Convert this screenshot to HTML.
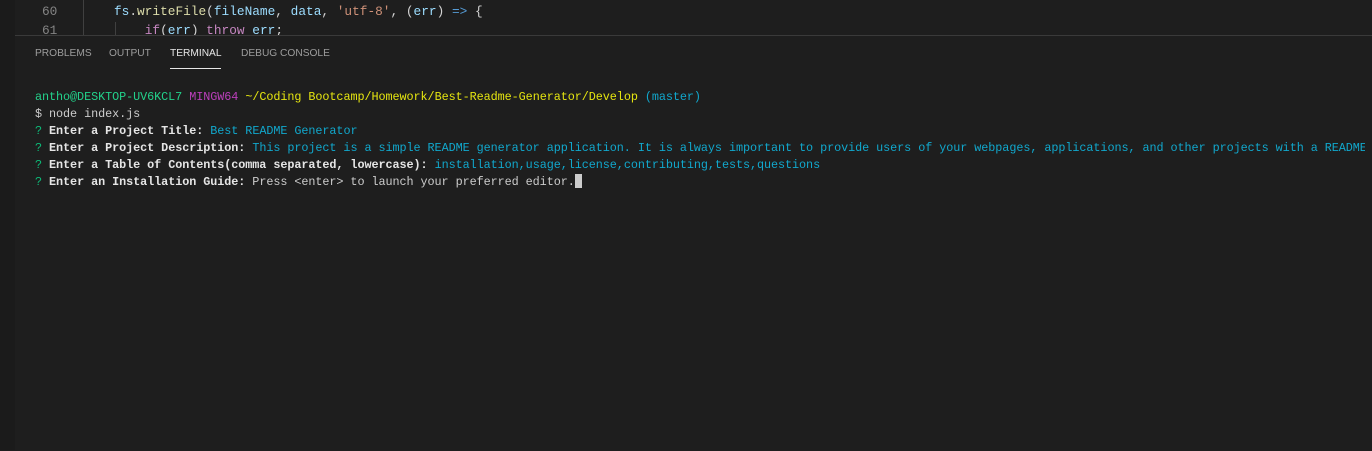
<!DOCTYPE html>
<html><head><meta charset="utf-8"><style>
html,body{margin:0;padding:0;width:1372px;height:450px;overflow:hidden;background:#1e1e1e;}
.left{position:absolute;left:0;top:0;width:15px;height:450px;background:#1b1b1b;}
.editor{position:absolute;left:15px;top:0;width:1357px;height:35px;background:#1e1e1e;overflow:hidden;font-family:"Liberation Mono",monospace;font-size:12.8px;}
.ln{position:absolute;left:27px;width:30px;color:#858585;text-align:left;}
.code{position:absolute;left:99px;white-space:pre;color:#d4d4d4;}
.guide{position:absolute;top:0;width:1px;height:35px;background:#404040;}
.panel{position:absolute;left:15px;top:35px;width:1357px;height:415px;background:#1e1e1e;border-top:1px solid #3a3a3a;}
.tabs{position:absolute;top:12px;left:20px;font-family:"Liberation Sans",sans-serif;font-size:10.2px;color:#9d9d9d;}
.tabs span{position:absolute;white-space:nowrap;}
.term{position:absolute;left:20px;top:53px;width:1330px;overflow:hidden;font-family:"Liberation Mono",monospace;font-size:11.8px;letter-spacing:-0.07px;line-height:17px;white-space:pre;color:#cccccc;}
.g{color:#23d18b}.m{color:#bc3fbc}.y{color:#e5e510}.c{color:#11a8cd}.q{color:#0dbc79}.b{color:#e5e5e5;font-weight:bold}
.cur{display:inline-block;width:7px;height:14px;background:#cccccc;vertical-align:-3px;}
</style></head><body>
<div class="left"></div>
<div class="editor">
<div class="guide" style="left:68px"></div>
<div class="guide" style="left:100px;top:22px;height:13px"></div>
<div class="ln" style="top:4px">60</div>
<div class="code" style="top:4px"><span style="color:#9cdcfe">fs</span>.<span style="color:#dcdcaa">writeFile</span>(<span style="color:#9cdcfe">fileName</span>, <span style="color:#9cdcfe">data</span>, <span style="color:#ce9178">'utf-8'</span>, (<span style="color:#9cdcfe">err</span>) <span style="color:#569cd6">=&gt;</span> {</div>
<div class="ln" style="top:23px">61</div>
<div class="code" style="top:23px">    <span style="color:#c586c0">if</span>(<span style="color:#9cdcfe">err</span>) <span style="color:#c586c0">throw</span> <span style="color:#9cdcfe">err</span>;</div>
</div>
<div class="panel">
<div class="tabs">
<span style="left:0">PROBLEMS</span>
<span style="left:74px">OUTPUT</span>
<span style="left:135px;color:#e7e7e7">TERMINAL</span>
<span style="left:206px">DEBUG CONSOLE</span>
<div style="position:absolute;left:135px;top:20px;width:51px;height:1px;background:#e7e7e7"></div>
</div>
<div class="term"><span class="g">antho@DESKTOP-UV6KCL7</span> <span class="m">MINGW64</span> <span class="y">~/Coding Bootcamp/Homework/Best-Readme-Generator/Develop</span> <span class="c">(master)</span>
$ node index.js
<span class="q">?</span> <span class="b">Enter a Project Title:</span> <span class="c">Best README Generator</span>
<span class="q">?</span> <span class="b">Enter a Project Description:</span> <span class="c">This project is a simple README generator application. It is always important to provide users of your webpages, applications, and other projects with a README file</span>
<span class="q">?</span> <span class="b">Enter a Table of Contents(comma separated, lowercase):</span> <span class="c">installation,usage,license,contributing,tests,questions</span>
<span class="q">?</span> <span class="b">Enter an Installation Guide:</span> Press &lt;enter&gt; to launch your preferred editor.<span class="cur"></span></div>
</div>
</body></html>
